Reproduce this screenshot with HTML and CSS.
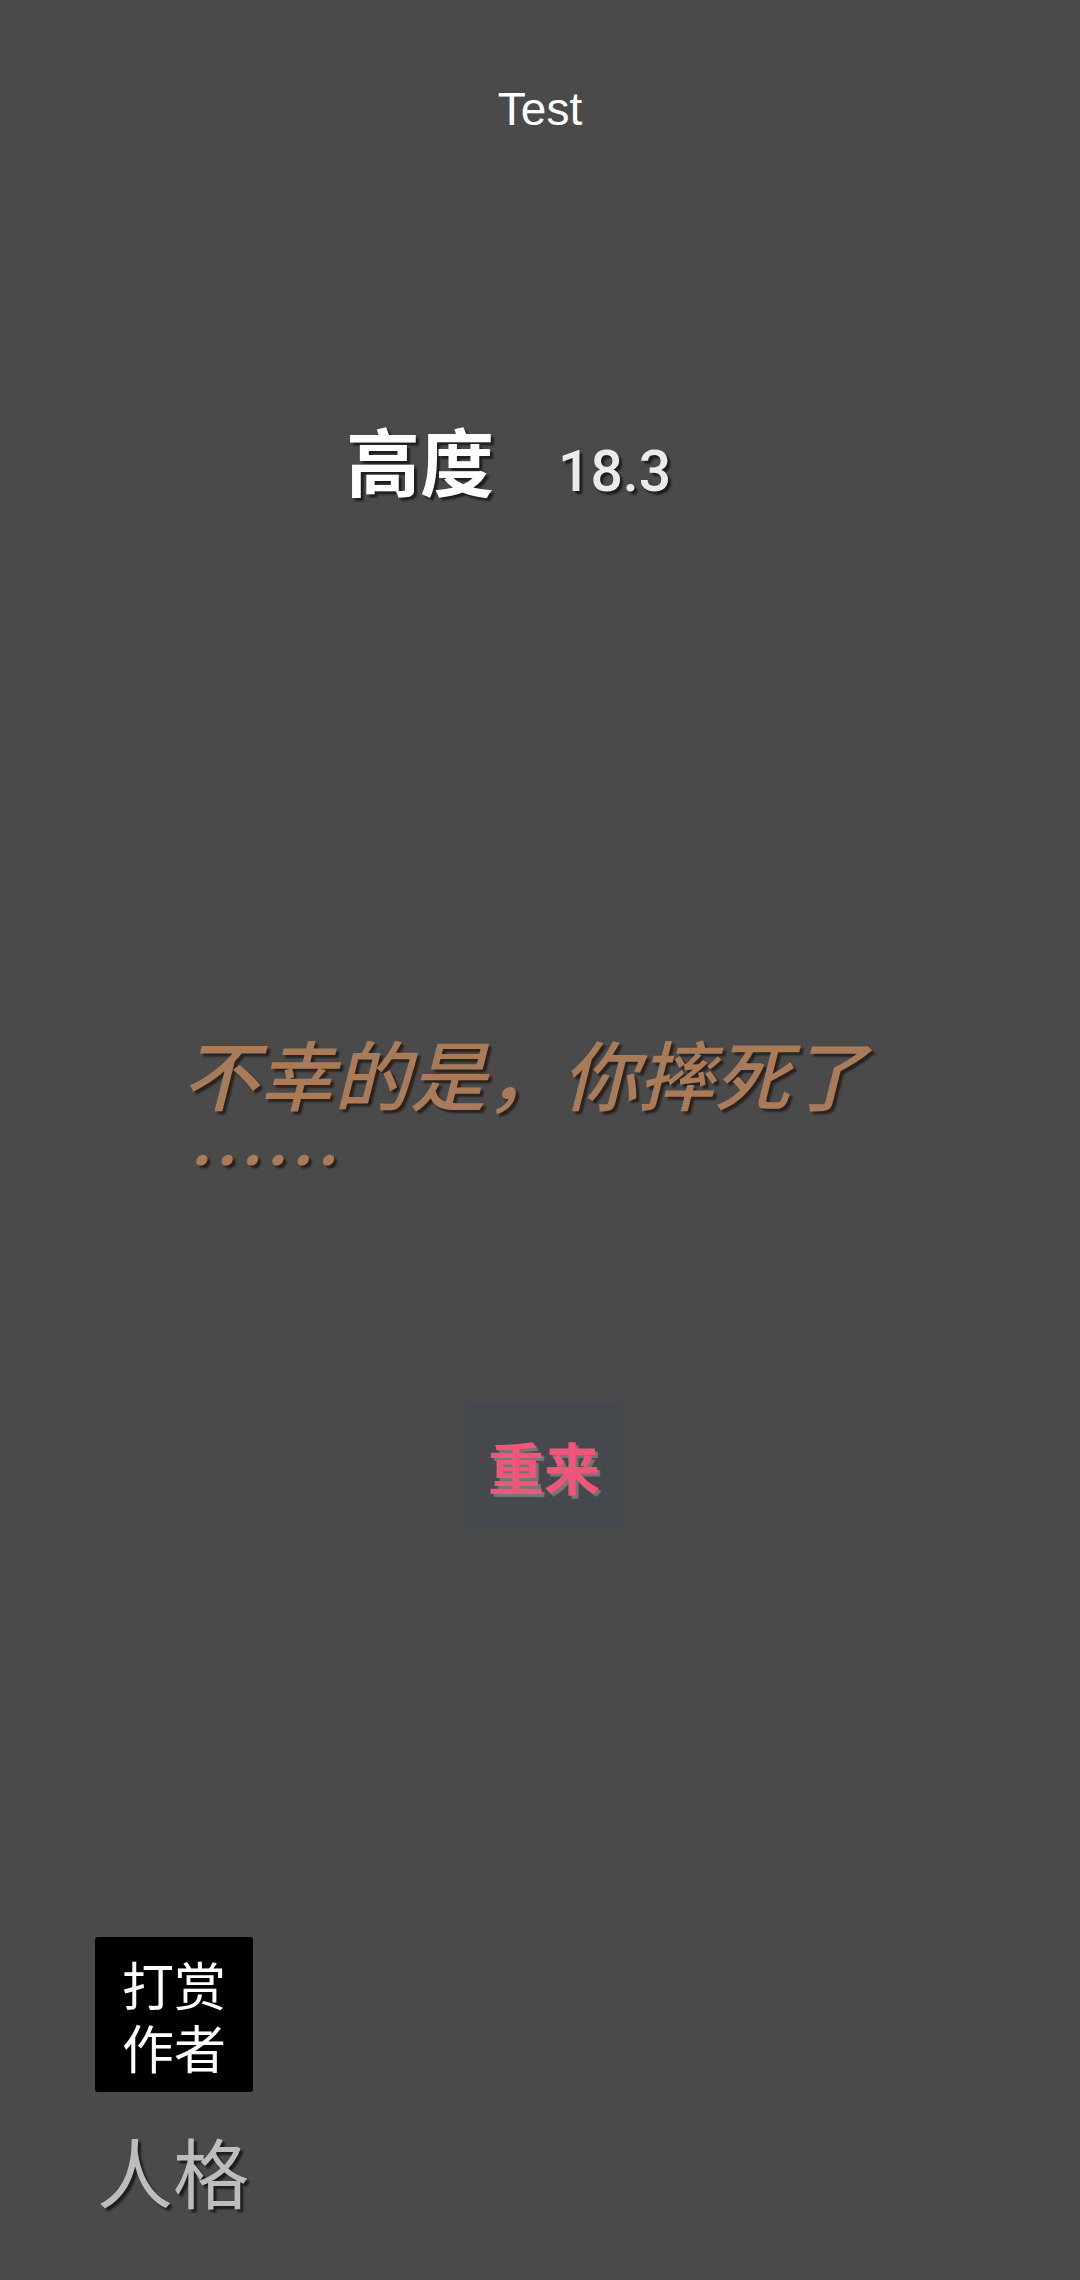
FILE: index.html
```html
<!DOCTYPE html>
<html lang="zh">
<head>
<meta charset="utf-8">
<title>Test</title>
<link rel="stylesheet" href="styles.css">
</head>
<body>
<main class="screen">
  <header class="title">Test</header>
  <section class="height-row">
    <span class="height-label">高度</span>
    <span class="height-value">18.3</span>
  </section>
  <p class="death">不幸的是，你摔死了……</p>
  <div class="retry-wrap"><button class="retry">重来</button></div>
  <footer class="bottom">
    <div class="tip">打赏<br>作者</div>
    <div class="persona">人格</div>
  </footer>
</main>
</body>
</html>
```
FILE: styles.css
```css
html, body {
  margin: 0;
  padding: 0;
  background: #4a4a4a;
}
.screen {
  width: 1080px;
  height: 2280px;
  display: flex;
  flex-direction: column;
  font-family: Roboto, "Liberation Sans", "Noto Sans CJK SC", sans-serif;
  color: #fff;
  overflow: hidden;
}
.title {
  margin-top: 84px;
  text-align: center;
  font-family: "Liberation Sans", sans-serif;
  font-size: 46px;
  line-height: 50px;
}
.height-row {
  margin-top: 285px;
  padding-left: 346px;
  display: flex;
  align-items: baseline;
  gap: 64px;
}
.height-label {
  font-family: "Noto Sans CJK SC", sans-serif;
  font-size: 74px;
  font-weight: 700;
  line-height: 80px;
  color: #fff;
  text-shadow: 3px 3px 2px #1e1e1e;
}
.height-value {
  font-family: Roboto, "Liberation Sans", sans-serif;
  font-size: 57px;
  font-weight: 500;
  line-height: 80px;
  color: #ebebeb;
  text-shadow: 3px 3px 2px #1e1e1e;
}
.death {
  width: 716px;
  margin: 518px auto 0;
  font-family: "Noto Sans CJK SC", sans-serif;
  font-size: 76px;
  font-weight: 500;
  font-style: italic;
  line-height: 84px;
  line-break: anywhere;
  color: #a97b59;
  text-shadow: 3px 3px 2px #272322;
}
.retry-wrap {
  margin-top: 204px;
  display: flex;
  justify-content: center;
}
.retry {
  width: 158px;
  height: 127px;
  margin-left: 8px;
  border: none;
  border-radius: 0;
  background: #45484c;
  padding: 0;
  font-family: "Noto Sans CJK SC", sans-serif;
  font-size: 56px;
  font-weight: 700;
  line-height: 1;
  color: #f0567a;
  text-shadow: 3px 3px 1px rgba(130, 130, 130, 0.8);
}
.bottom {
  margin-top: auto;
  margin-bottom: 65px;
  padding-left: 95px;
  display: flex;
  flex-direction: column;
  align-items: flex-start;
  gap: 33px;
}
.tip {
  width: 158px;
  height: 155px;
  box-sizing: border-box;
  padding-top: 15px;
  background: #000;
  border-radius: 3px;
  font-family: "Noto Sans CJK SC", sans-serif;
  font-size: 52px;
  line-height: 63px;
  color: #fff;
  text-align: center;
}
.persona {
  margin-left: 2px;
  font-family: "Noto Sans CJK SC", sans-serif;
  font-size: 76px;
  line-height: 90px;
  color: #bdbdbd;
  text-shadow: 3px 3px 2px #1e1e1e;
}
```
